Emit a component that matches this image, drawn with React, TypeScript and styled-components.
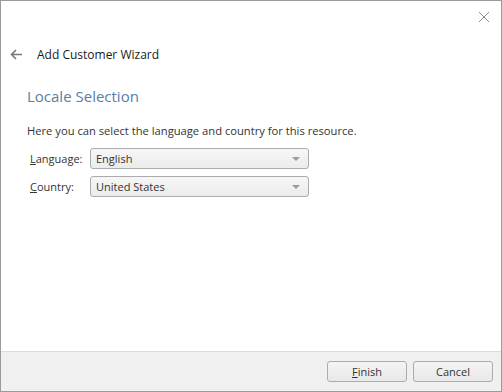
import React from "react";
import styled, { createGlobalStyle } from "styled-components";

const GlobalStyle = createGlobalStyle`
  html, body {
    margin: 0;
    padding: 0;
    background: #ffffff;
  }
  body {
    font-family: "Open Sans", "Noto Sans", sans-serif;
  }
`;

const Window = styled.div`
  box-sizing: border-box;
  width: 502px;
  height: 392px;
  border: 1px solid #9a9a9a;
  background: #ffffff;
  display: flex;
  flex-direction: column;
`;

const TitleBar = styled.div`
  height: 31px;
  display: flex;
  justify-content: flex-end;
  align-items: center;
  padding-right: 10px;
`;

const CloseButton = styled.button`
  border: none;
  background: transparent;
  padding: 0;
  width: 14px;
  height: 14px;
  display: flex;
  align-items: center;
  justify-content: center;
`;

const Header = styled.div`
  display: flex;
  align-items: center;
  height: 40px;
  padding-left: 8px;
  margin-top: 2px;
`;

const BackButton = styled.button`
  border: none;
  background: transparent;
  padding: 0;
  width: 14px;
  height: 14px;
  display: flex;
  align-items: center;
  justify-content: center;
  margin-right: 14px;
`;

const WizardTitle = styled.div`
  font-size: 12px;
  color: #1a1a1a;
`;

const Content = styled.div`
  flex: 1;
  padding: 12px 26px 0;
`;

const PageTitle = styled.div`
  font-size: 15px;
  color: #5b7ea6;
  margin-bottom: 17px;
`;

const Description = styled.div`
  font-size: 11.2px;
  color: #333333;
  margin-bottom: 10px;
`;

const FieldGrid = styled.div`
  display: grid;
  grid-template-columns: 60px 219px;
  row-gap: 7px;
  align-items: center;
  padding-left: 3px;
`;

const Label = styled.label`
  font-size: 11px;
  color: #333333;
  u {
    text-decoration: underline;
  }
`;

const Select = styled.div`
  box-sizing: border-box;
  height: 21px;
  border: 1px solid #acacac;
  border-radius: 3px;
  background: linear-gradient(#f6f6f6, #ececec);
  display: flex;
  align-items: center;
  justify-content: space-between;
  padding: 0 8px 0 5px;
  font-size: 11px;
  color: #333333;
`;

const Arrow = styled.span`
  width: 0;
  height: 0;
  border-left: 4px solid transparent;
  border-right: 4px solid transparent;
  border-top: 4px solid #9b9b9b;
`;

const Footer = styled.div`
  height: 39px;
  border-top: 1px solid #dcdcdc;
  background: #f0f0f0;
  display: flex;
  justify-content: flex-end;
  align-items: center;
  gap: 6px;
  padding-right: 8px;
`;

const Button = styled.button`
  box-sizing: border-box;
  width: 80px;
  height: 21px;
  border: 1px solid #acacac;
  border-radius: 3px;
  background: linear-gradient(#f4f4f4, #e8e8e8);
  font-family: "Open Sans", "Noto Sans", sans-serif;
  font-size: 11px;
  color: #333333;
  padding: 0;
`;

export default function App() {
  return (
    <>
      <GlobalStyle />
      <Window>
        <TitleBar>
          <CloseButton>
            <svg width="12" height="12" viewBox="0 0 12 12">
              <path d="M1 1 L11 11 M11 1 L1 11" stroke="#8a8a8a" strokeWidth="1" />
            </svg>
          </CloseButton>
        </TitleBar>
        <Header>
          <BackButton>
            <svg width="13" height="11" viewBox="0 0 13 11">
              <path d="M12 5.5 H2 M6 1 L1.5 5.5 L6 10" stroke="#7a7a7a" strokeWidth="1.6" fill="none" />
            </svg>
          </BackButton>
          <WizardTitle>Add Customer Wizard</WizardTitle>
        </Header>
        <Content>
          <PageTitle>Locale Selection</PageTitle>
          <Description>Here you can select the language and country for this resource.</Description>
          <FieldGrid>
            <Label>
              <u>L</u>anguage:
            </Label>
            <Select>
              English
              <Arrow />
            </Select>
            <Label>
              <u>C</u>ountry:
            </Label>
            <Select>
              United States
              <Arrow />
            </Select>
          </FieldGrid>
        </Content>
        <Footer>
          <Button>
            <u>F</u>inish
          </Button>
          <Button>Cancel</Button>
        </Footer>
      </Window>
    </>
  );
}
